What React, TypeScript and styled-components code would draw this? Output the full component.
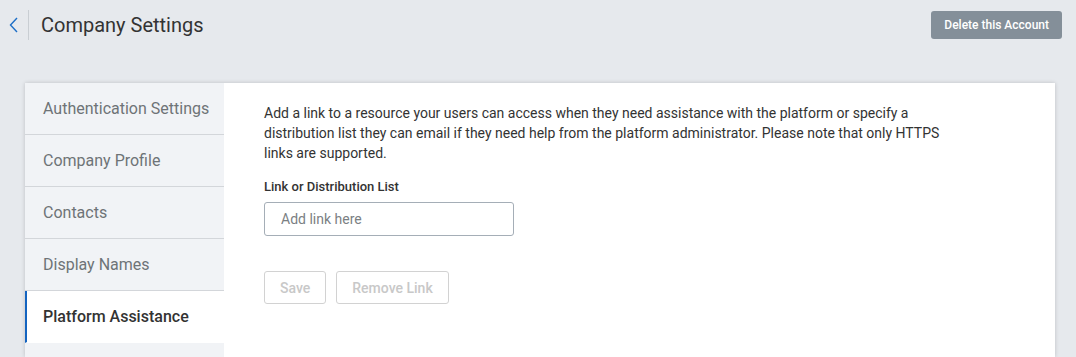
import React from 'react';
import styled, { createGlobalStyle } from 'styled-components';

const GlobalStyle = createGlobalStyle`
  body {
    margin: 0;
    background: #e6e9ed;
    font-family: Roboto, "Liberation Sans", Arial, sans-serif;
    color: #333;
  }
`;

const Page = styled.div`
  display: flex;
  flex-direction: column;
  height: 357px;
  overflow: hidden;
`;

const TopBar = styled.header`
  display: flex;
  align-items: center;
  height: 50px;
  padding: 0 14px 0 7px;
  .title {
    display: flex;
    align-items: center;
    flex: 1;
  }
  h1 {
    margin: 0;
    font-size: 20px;
    font-weight: 400;
    color: #333;
  }
`;

const BackButton = styled.button`
  display: flex;
  align-items: center;
  background: none;
  border: 0;
  padding: 0 9px 0 2px;
  height: 30px;
  border-right: 1px solid #c9ced3;
  margin-right: 12px;
  cursor: pointer;
`;

const DangerButton = styled.button`
  background: #848f99;
  color: #fff;
  border: 0;
  border-radius: 3px;
  height: 28px;
  padding: 0 13px;
  font-family: inherit;
  font-size: 12px;
  font-weight: 500;
`;

const Card = styled.div`
  display: flex;
  flex: 1;
  margin: 33px 21px 0 25px;
  background: #fff;
  box-shadow: 0 0 4px rgba(0, 0, 0, 0.18);
`;

const SideNav = styled.nav`
  width: 199px;
  background: #f1f3f6;
  display: flex;
  flex-direction: column;
`;

const NavItem = styled.div<{ $active?: boolean }>`
  height: 51px;
  display: flex;
  align-items: center;
  padding-left: ${(p) => (p.$active ? '16px' : '18px')};
  font-size: 16px;
  color: ${(p) => (p.$active ? '#333' : '#6e7377')};
  font-weight: ${(p) => (p.$active ? 500 : 400)};
  background: ${(p) => (p.$active ? '#fff' : 'transparent')};
  border-left: ${(p) => (p.$active ? '2px solid #1464c0' : '0')};
  border-bottom: 1px solid ${(p) => (p.$active ? 'transparent' : '#d3d6da')};
`;

const Content = styled.section`
  flex: 1;
  padding: 20px 40px;
  p {
    margin: 0 0 16px;
    max-width: 680px;
    font-size: 14px;
    line-height: 20px;
    color: #333;
  }
  label {
    display: block;
    font-size: 13px;
    line-height: 16px;
    font-weight: 500;
    color: #333;
    margin-bottom: 7px;
  }
`;

const TextInput = styled.input`
  box-sizing: border-box;
  width: 250px;
  height: 34px;
  border: 1px solid #a5aeb7;
  border-radius: 3px;
  padding: 0 16px;
  font-family: inherit;
  font-size: 14px;
  color: #333;
  &::placeholder {
    color: #7b7f83;
  }
`;

const Actions = styled.div`
  display: flex;
  gap: 10px;
  margin-top: 35px;
`;

const GhostButton = styled.button`
  height: 33px;
  padding: 0 15px;
  background: #fff;
  border: 1px solid #d2d2d2;
  border-radius: 3px;
  color: #c8c8c8;
  font-family: inherit;
  font-size: 14px;
  font-weight: 500;
`;

const navItems = [
  'Authentication Settings',
  'Company Profile',
  'Contacts',
  'Display Names',
  'Platform Assistance',
];

export default function App() {
  return (
    <Page>
      <GlobalStyle />
      <TopBar>
        <div className="title">
          <BackButton aria-label="Back">
            <svg width="10" height="16" viewBox="0 0 10 16">
              <path d="M8 1 L1.5 8 L8 15" fill="none" stroke="#1d6fc7" strokeWidth="1.4" />
            </svg>
          </BackButton>
          <h1>Company Settings</h1>
        </div>
        <DangerButton>Delete this Account</DangerButton>
      </TopBar>
      <Card>
        <SideNav>
          {navItems.map((item) => (
            <NavItem key={item} $active={item === 'Platform Assistance'}>
              {item}
            </NavItem>
          ))}
        </SideNav>
        <Content>
          <p>
            Add a link to a resource your users can access when they need assistance with the platform or specify a
            distribution list they can email if they need help from the platform administrator. Please note that only
            HTTPS links are supported.
          </p>
          <label htmlFor="assist-link">Link or Distribution List</label>
          <TextInput id="assist-link" placeholder="Add link here" />
          <Actions>
            <GhostButton>Save</GhostButton>
            <GhostButton>Remove Link</GhostButton>
          </Actions>
        </Content>
      </Card>
    </Page>
  );
}
